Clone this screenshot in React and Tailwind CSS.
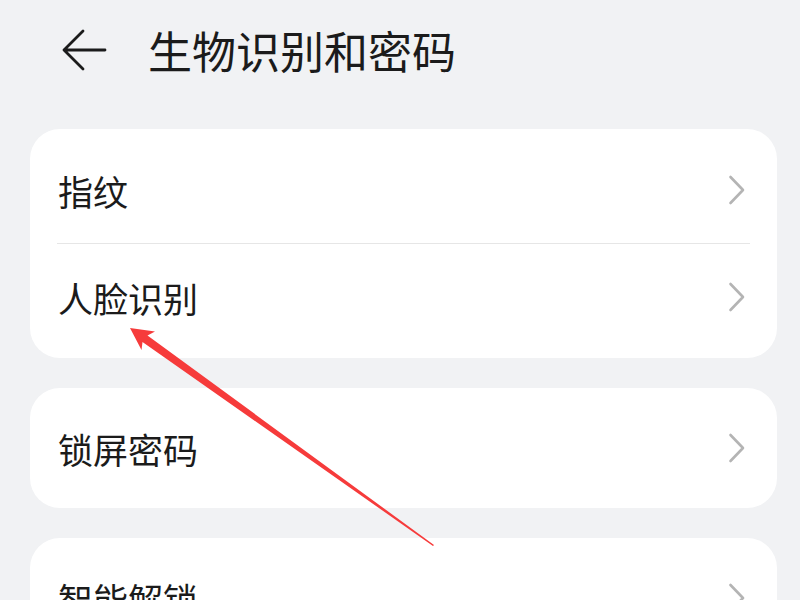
const font = { fontFamily: '"Noto Sans CJK SC", "Noto Sans", sans-serif' };

function Chevron() {
  return (
    <svg width="18" height="30" viewBox="0 0 18 30" fill="none" className="shrink-0">
      <path d="M2.5 2 L15 15 L2.5 28" stroke="#b4b4b4" strokeWidth="2.6" strokeLinecap="round" strokeLinejoin="round" />
    </svg>
  );
}

function Row({ label, h = 'h-[106px]' }) {
  return (
    <div className={`flex items-center justify-between pl-[28px] pr-[31px] ${h}`}>
      <span className="text-[35px] leading-none text-[#1b1b1b]">{label}</span>
      <Chevron />
    </div>
  );
}

export default function App() {
  return (
    <div className="relative w-[800px] h-[600px] overflow-hidden bg-[#f1f2f4]" style={font}>
      {/* Header */}
      <div className="flex items-center h-[100px] pl-[61px]">
        <svg width="46" height="42" viewBox="0 0 46 42" fill="none">
          <path d="M44 21 H3 M22 2 L3 21 L22 40" stroke="#1b1b1b" strokeWidth="2.8" strokeLinecap="round" strokeLinejoin="round" />
        </svg>
        <h1 className="ml-[41px] text-[44px] leading-none text-[#1b1b1b] font-normal">生物识别和密码</h1>
      </div>

      <div className="mt-[29px] ml-[30px] w-[747px] flex flex-col gap-[30px]">
        <div className="bg-white rounded-[30px] py-[8px]">
          <Row label="指纹" />
          <div className="mx-[27px] h-px bg-[#e6e6e6]" />
          <Row label="人脸识别" />
        </div>
        <div className="bg-white rounded-[30px]">
          <Row label="锁屏密码" h="h-[120px]" />
        </div>
        <div className="bg-white rounded-[30px]">
          <Row label="智能解锁" h="h-[120px]" />
        </div>
      </div>

      {/* red annotation arrow */}
      <svg className="absolute left-0 top-0 pointer-events-none" width="800" height="600" viewBox="0 0 800 600">
        <polygon
          points="130,328 155,331.5 147.5,335.5 434,545 433,546 142.5,342 141.5,350"
          fill="#f63b3b"
        />
      </svg>
    </div>
  );
}
